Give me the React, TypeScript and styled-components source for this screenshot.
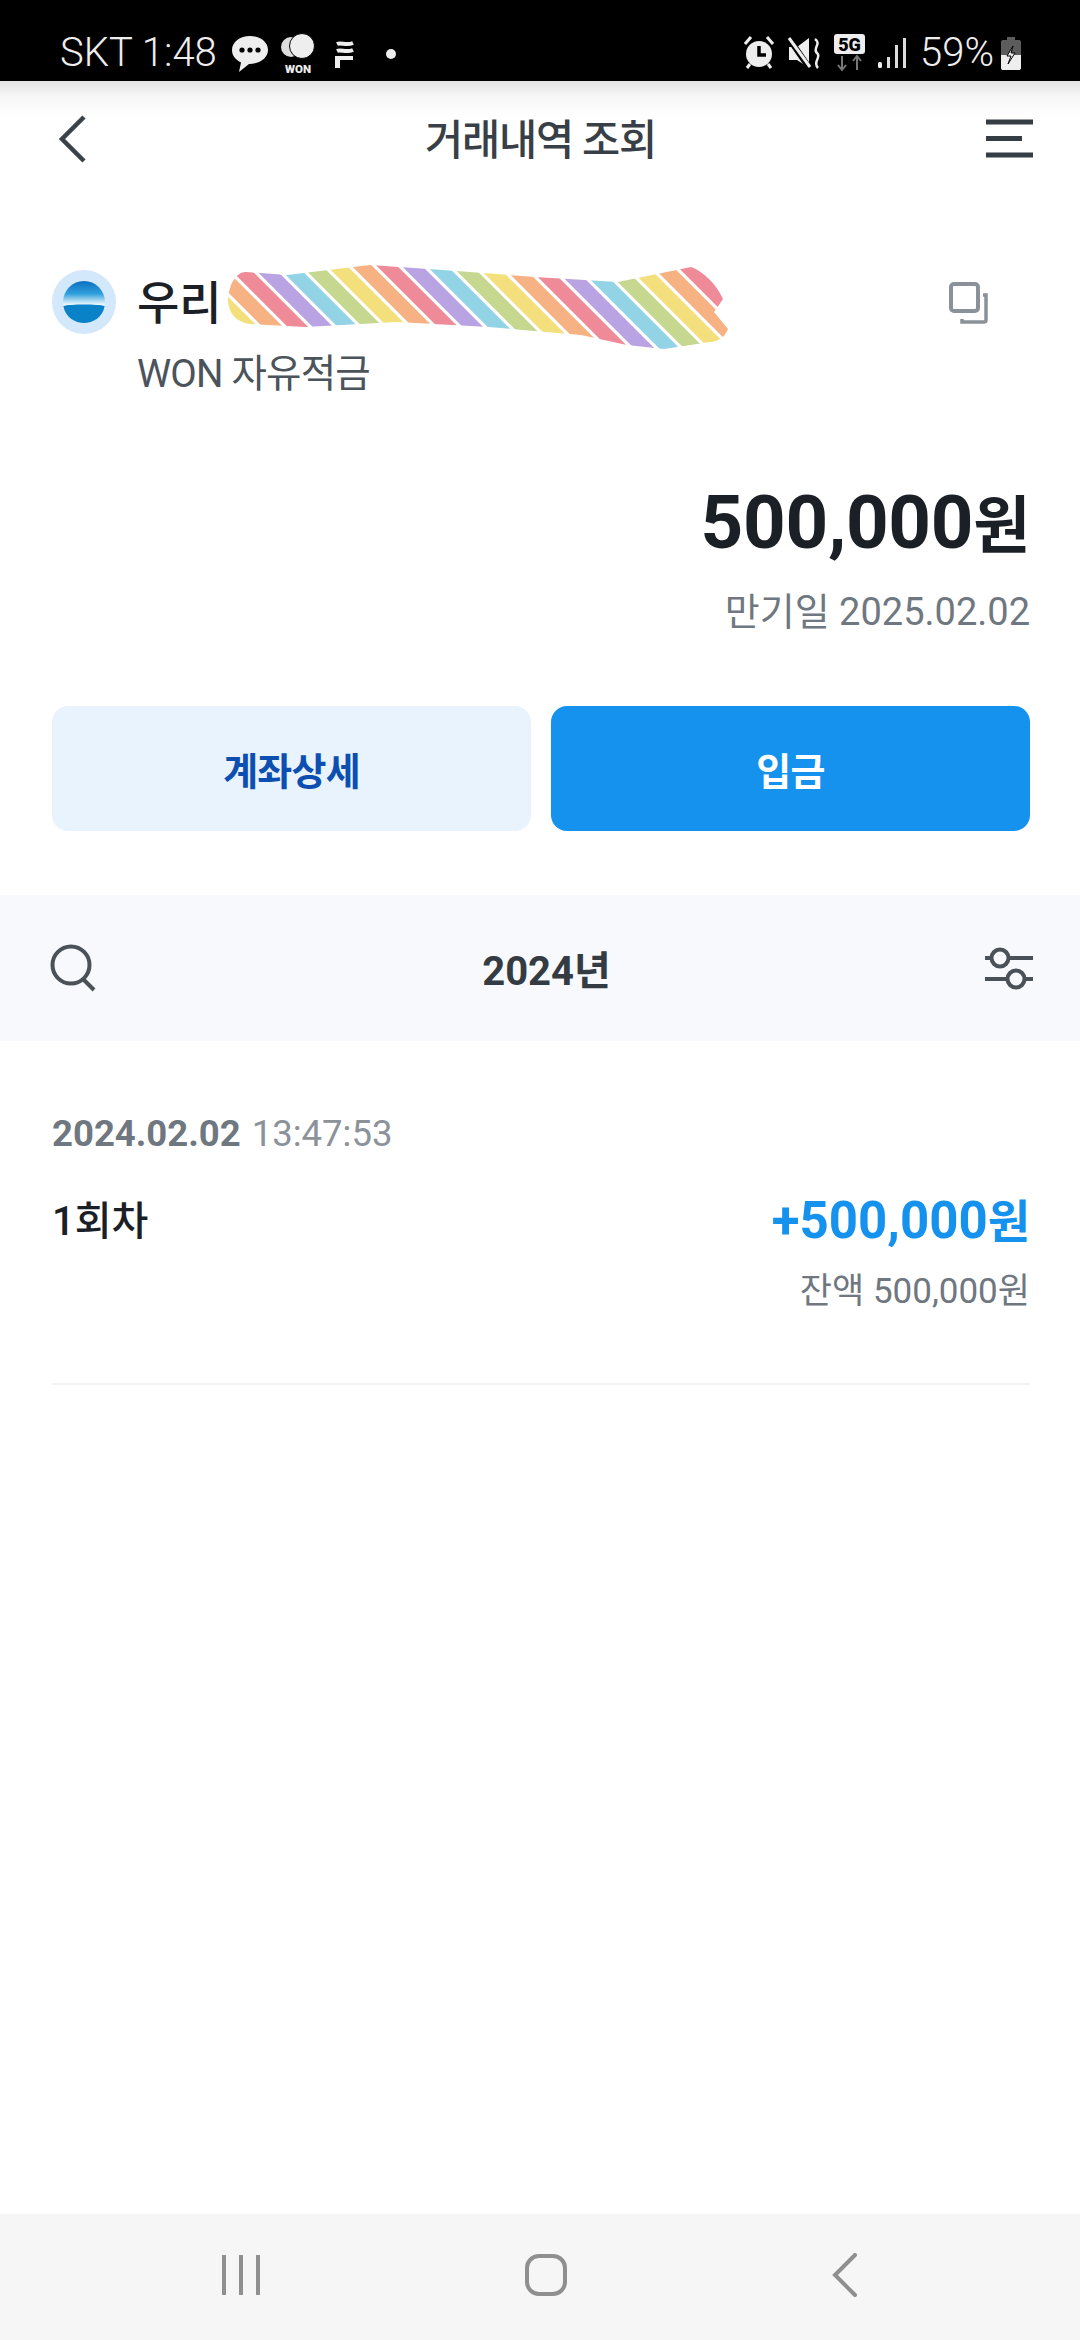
import React from "react";
import styled, { createGlobalStyle } from "styled-components";

const GlobalStyle = createGlobalStyle`
  html, body {
    margin: 0;
    padding: 0;
    background: #fff;
  }
  * {
    box-sizing: border-box;
  }
  body {
    font-family: Roboto, "Noto Sans CJK KR", sans-serif;
  }
`;

const Screen = styled.div`
  width: 1080px;
  height: 2340px;
  display: flex;
  flex-direction: column;
  background: #fff;
  overflow: hidden;
`;

const StatusBar = styled.div`
  height: 81px;
  flex: none;
  background: #000;
  color: #eeeeee;
  display: flex;
  align-items: center;
  justify-content: space-between;
  padding: 24px 58px 0 60px;
  font-size: 40px;
  font-weight: 300;
  position: relative;
`;

const StatusGroup = styled.div<{ $gap: number }>`
  display: flex;
  align-items: center;
  gap: ${(p) => p.$gap}px;
`;

const Header = styled.header`
  height: 116px;
  flex: none;
  display: flex;
  align-items: center;
  justify-content: space-between;
  padding: 0 47px 0 58px;
  background: linear-gradient(to bottom, #e3e3e3 0, #f7f7f7 16px, #fdfdfd 30px, #fff 40px);
`;

const Title = styled.h1`
  margin: 0 0 5px 8px;
  font-size: 41.5px;
  font-weight: 500;
  color: #383f46;
  letter-spacing: -1.2px;
`;

const Account = styled.section`
  padding: 62px 50px 0 52px;
  position: relative;
`;

const AccountRow = styled.div`
  display: flex;
  align-items: center;
  gap: 21px;
  height: 80px;
`;

const LogoWrap = styled.div`
  margin-top: 6px;
  height: 64px;
`;

const BankName = styled.span`
  font-size: 46px;
  font-weight: 500;
  color: #1b2026;
`;

const Scribble = styled.svg`
  position: absolute;
  left: 220px;
  top: 65px;
`;

const CopyIcon = styled.svg`
  position: absolute;
  left: 945px;
  top: 85px;
`;

const ProductName = styled.div`
  margin: 13px 0 0 85px;
  font-size: 38.5px;
  line-height: 44px;
  color: #4b535b;
  letter-spacing: -0.8px;
`;

const Balance = styled.div`
  margin-top: 85px;
  text-align: right;
  font-size: 74.5px;
  line-height: 84px;
  font-weight: 700;
  color: #1b2026;
  letter-spacing: -0.3px;
`;

const Won = styled.span<{ $size: number }>`
  font-size: ${(p) => p.$size}px;
`;

const DueDate = styled.div`
  margin-top: 21px;
  text-align: right;
  font-size: 38px;
  line-height: 44px;
  color: #6f7780;
`;

const Actions = styled.div`
  margin-top: 72px;
  display: grid;
  grid-template-columns: 1fr 1fr;
  gap: 20px;
`;

const ActionButton = styled.button<{ $primary?: boolean }>`
  height: 125px;
  border: 0;
  border-radius: 16px;
  font-family: inherit;
  font-size: 38px;
  font-weight: 700;
  letter-spacing: -0.8px;
  color: ${(p) => (p.$primary ? "#fff" : "#0d4fb0")};
  background: ${(p) => (p.$primary ? "#1591ee" : "#e8f3fe")};
`;

const FilterBar = styled.div`
  margin-top: 64px;
  height: 146px;
  flex: none;
  display: flex;
  align-items: center;
  justify-content: space-between;
  padding: 0 47px 0 50px;
  background: #f7f9fc;
`;

const YearLabel = styled.div`
  margin-left: 10px;
  font-size: 40px;
  font-weight: 700;
  color: #353b42;
`;

const Transaction = styled.section`
  margin: 0 50px 0 52px;
  padding-top: 71px;
  height: 344px;
  flex: none;
  border-bottom: 2px solid #f1f3f5;
`;

const DateLine = styled.div`
  display: flex;
  gap: 11px;
  font-size: 36.5px;
  line-height: 44px;
  color: #8b929a;
`;

const DateStrong = styled.span`
  font-weight: 700;
  color: #6f7780;
`;

const AmountRow = styled.div`
  margin-top: 32px;
  display: flex;
  align-items: center;
  justify-content: space-between;
  height: 60px;
`;

const Round = styled.span`
  font-size: 40px;
  font-weight: 500;
  color: #1b2026;
`;

const Amount = styled.span`
  font-size: 51px;
  font-weight: 700;
  color: #1591ee;
`;

const Remain = styled.div`
  margin-top: 22px;
  text-align: right;
  font-size: 35px;
  line-height: 44px;
  color: #6f7780;
`;

const Spacer = styled.div`
  flex: 1;
`;

const NavBar = styled.nav`
  height: 126px;
  flex: none;
  display: flex;
  align-items: center;
  justify-content: space-between;
  padding: 0 222px 4px 222px;
  background: #f6f6f6;
`;

const stripeColors = ["#ef8a98", "#b9a3e3", "#93d3e6", "#c6d78f", "#f3df7c", "#f6b283"];

const blob =
  "M8 37 C10 18 18 10 26 10 L67 13 L150 3 L223 8 L315 15 L398 20 L471 5 C485 10 498 25 503 37 L494 50 L508 67 C505 75 498 80 490 80 L444 87 L407 83 L361 73 L269 65 L177 60 L85 65 L30 62 C15 60 8 50 8 37 Z";

const Redaction = () => (
  <Scribble width="520" height="95" viewBox="0 0 520 95">
    <defs>
      <clipPath id="blob">
        <path d={blob} />
      </clipPath>
    </defs>
    <g clipPath="url(#blob)">
      {Array.from({ length: 26 }).map((_, i) => (
        <line
          key={i}
          x1={-72 + i * 25}
          y1={-10}
          x2={33 + i * 25}
          y2={95}
          stroke={stripeColors[(i + 3) % 6]}
          strokeWidth={14.5}
        />
      ))}
    </g>
  </Scribble>
);

const BankLogo = () => (
  <svg width="64" height="64" viewBox="0 0 64 64">
    <defs>
      <linearGradient id="sky" x1="0" y1="0" x2="0" y2="1">
        <stop offset="0" stopColor="#0a6fbf" />
        <stop offset="0.3" stopColor="#2f9fdc" />
        <stop offset="0.55" stopColor="#e6f5fc" />
        <stop offset="1" stopColor="#ffffff" />
      </linearGradient>
    </defs>
    <circle cx="32" cy="32" r="32" fill="#d3e8fb" />
    <circle cx="32" cy="32" r="21" fill="url(#sky)" />
    <path d="M11.4 36 C18 34 46 34 52.600 36 C51 47 41 53 32 53 C23 53 13 47 11.4 36 Z" fill="#0a82c8" />
  </svg>
);

const StatusLeftIcons = () => (
  <svg width="195" height="50" viewBox="0 0 195 50">
    <path d="M21 8 C11 8 3 14 3 22 C3 28 7 32 12 34.500 L10 44 L20 36 C30.500 36 39 30 39 22 C39 14 31 8 21 8 Z" fill="#eeeeee" />
    <circle cx="13" cy="22" r="2.600" fill="#000" />
    <circle cx="21" cy="22" r="2.600" fill="#000" />
    <circle cx="29" cy="22" r="2.600" fill="#000" />
    <circle cx="62" cy="19" r="10" fill="#dddddd" />
    <circle cx="73" cy="18" r="12.500" fill="#eeeeee" stroke="#000" strokeWidth="1" />
    <text x="69" y="45" textAnchor="middle" fontFamily="Roboto" fontWeight="900" fontSize="11.500" fill="#eeeeee">WON</text>
    <path d="M108 16 C112 14 117 18 124 15 M108 23 C112 21 117 25 124 22" stroke="#eeeeee" strokeWidth="4" fill="none" />
    <path d="M106 28 H124 V32 H111 V40 H106 Z" fill="#eeeeee" />
    <circle cx="162" cy="26" r="5" fill="#eeeeee" />
  </svg>
);

const StatusRightIcons = () => (
  <svg width="170" height="50" viewBox="0 0 170 50">
    <circle cx="15" cy="26" r="13" fill="#eeeeee" />
    <path d="M15 18 V27 H22" stroke="#000" strokeWidth="3.500" fill="none" />
    <path d="M1 16 L7 9 M29 16 L23 9 M6 36 L3 40 M24 36 L27 40" stroke="#eeeeee" strokeWidth="3" />
    <path d="M45 19 H53 L65 10 V40 L53 32 H45 Z" fill="#eeeeee" />
    <path d="M44 9 L66 41" stroke="#000" strokeWidth="6" />
    <path d="M45 10 L66 39" stroke="#eeeeee" strokeWidth="3" />
    <path d="M71 11 C78 16 68 20 73 25 C78 29 68 34 74 40" stroke="#eeeeee" strokeWidth="2.500" fill="none" />
    <rect x="90" y="6" width="31" height="20" rx="3" fill="#eeeeee" />
    <text x="105.500" y="22.500" textAnchor="middle" fontFamily="Roboto" fontWeight="900" fontSize="18" fill="#000">5G</text>
    <path d="M98 28 V41 M94 37 L98 42 L102 37 M113 42 V29 M109 33 L113 28 L117 33" stroke="#777" strokeWidth="2" fill="none" />
    <rect x="134" y="34" width="4" height="6" rx="1.500" fill="#eeeeee" />
    <rect x="143" y="29" width="3" height="11" fill="#dddddd" />
    <rect x="151" y="17" width="3" height="23" fill="#dddddd" />
    <rect x="159" y="10" width="3" height="30" fill="#dddddd" />
  </svg>
);

const BatteryIcon = () => (
  <svg width="22" height="36" viewBox="0 0 22 36">
    <path d="M7 2 H15 V5 H19 C20.500 5 21 6 21 7 V20 H1 V7 C1 6 1.500 5 3 5 H7 Z" fill="#5c5c5c" />
    <path d="M1 20 H21 V33 C21 34.500 20 35 19 35 H3 C2 35 1 34.500 1 33 Z" fill="#eeeeee" />
    <path d="M13 11 L7 21 H11 L8 29 L15 18 H11 Z" fill="#eeeeee" stroke="#000" strokeWidth="1" />
  </svg>
);

export default function App() {
  return (
    <Screen>
      <GlobalStyle />
      <StatusBar>
        <StatusGroup $gap={12}>
          <span>SKT 1:48</span>
          <StatusLeftIcons />
        </StatusGroup>
        <StatusGroup $gap={6}>
          <StatusRightIcons />
          <span>59%</span>
          <BatteryIcon />
        </StatusGroup>
      </StatusBar>

      <Header>
        <svg width="30" height="50" viewBox="0 0 30 50">
          <path d="M26 3 L4 25 L26 47" stroke="#3a4249" strokeWidth="4.500" fill="none" />
        </svg>
        <Title>거래내역 조회</Title>
        <svg width="48" height="40" viewBox="0 0 48 40">
          <path d="M1 3 H48 M1 19.500 H37 M1 36 H48" stroke="#343c44" strokeWidth="5" />
        </svg>
      </Header>

      <Account>
        <AccountRow>
          <LogoWrap>
            <BankLogo />
          </LogoWrap>
          <BankName>우리</BankName>
        </AccountRow>
        <Redaction />
        <CopyIcon width="44" height="44" viewBox="0 0 44 44">
          <rect x="6" y="2" width="27" height="27" rx="3" fill="none" stroke="#8b9199" strokeWidth="4" />
          <path d="M38 13 H41 V38 C41 39 40.500 40 39 40 H17 V37" fill="none" stroke="#8b9199" strokeWidth="3.500" />
        </CopyIcon>
        <ProductName>WON 자유적금</ProductName>
        <Balance>
          500,000<Won $size={62}>원</Won>
        </Balance>
        <DueDate>만기일 2025.02.02</DueDate>
        <Actions>
          <ActionButton>계좌상세</ActionButton>
          <ActionButton $primary>입금</ActionButton>
        </Actions>
      </Account>

      <FilterBar>
        <svg width="48" height="48" viewBox="0 0 48 48">
          <circle cx="21" cy="21" r="18.500" fill="none" stroke="#4a5158" strokeWidth="4" />
          <path d="M33 35 L44 46" stroke="#4a5158" strokeWidth="4" />
        </svg>
        <YearLabel>2024년</YearLabel>
        <svg width="48" height="44" viewBox="0 0 48 44">
          <path d="M0 12 H6 M24 12 H48 M0 33 H22 M40 33 H48" stroke="#4a5158" strokeWidth="4" />
          <circle cx="15" cy="12" r="8.500" fill="none" stroke="#4a5158" strokeWidth="4" />
          <circle cx="31" cy="33" r="8.500" fill="none" stroke="#4a5158" strokeWidth="4" />
        </svg>
      </FilterBar>

      <Transaction>
        <DateLine>
          <DateStrong>2024.02.02</DateStrong>
          <span>13:47:53</span>
        </DateLine>
        <AmountRow>
          <Round>1회차</Round>
          <Amount>
            +500,000<Won $size={46}>원</Won>
          </Amount>
        </AmountRow>
        <Remain>잔액 500,000원</Remain>
      </Transaction>

      <Spacer />

      <NavBar>
        <svg width="38" height="40" viewBox="0 0 38 40">
          <path d="M2 1 V39 M19 1 V39 M36 1 V39" stroke="#8f8f8f" strokeWidth="4" strokeLinecap="round" />
        </svg>
        <svg width="44" height="44" viewBox="0 0 44 44">
          <rect x="3" y="3" width="38" height="38" rx="12" fill="none" stroke="#8f8f8f" strokeWidth="4" />
        </svg>
        <svg width="26" height="44" viewBox="0 0 26 44">
          <path d="M23 2 L3 22 L23 42" fill="none" stroke="#8f8f8f" strokeWidth="4" strokeLinecap="round" />
        </svg>
      </NavBar>
    </Screen>
  );
}
